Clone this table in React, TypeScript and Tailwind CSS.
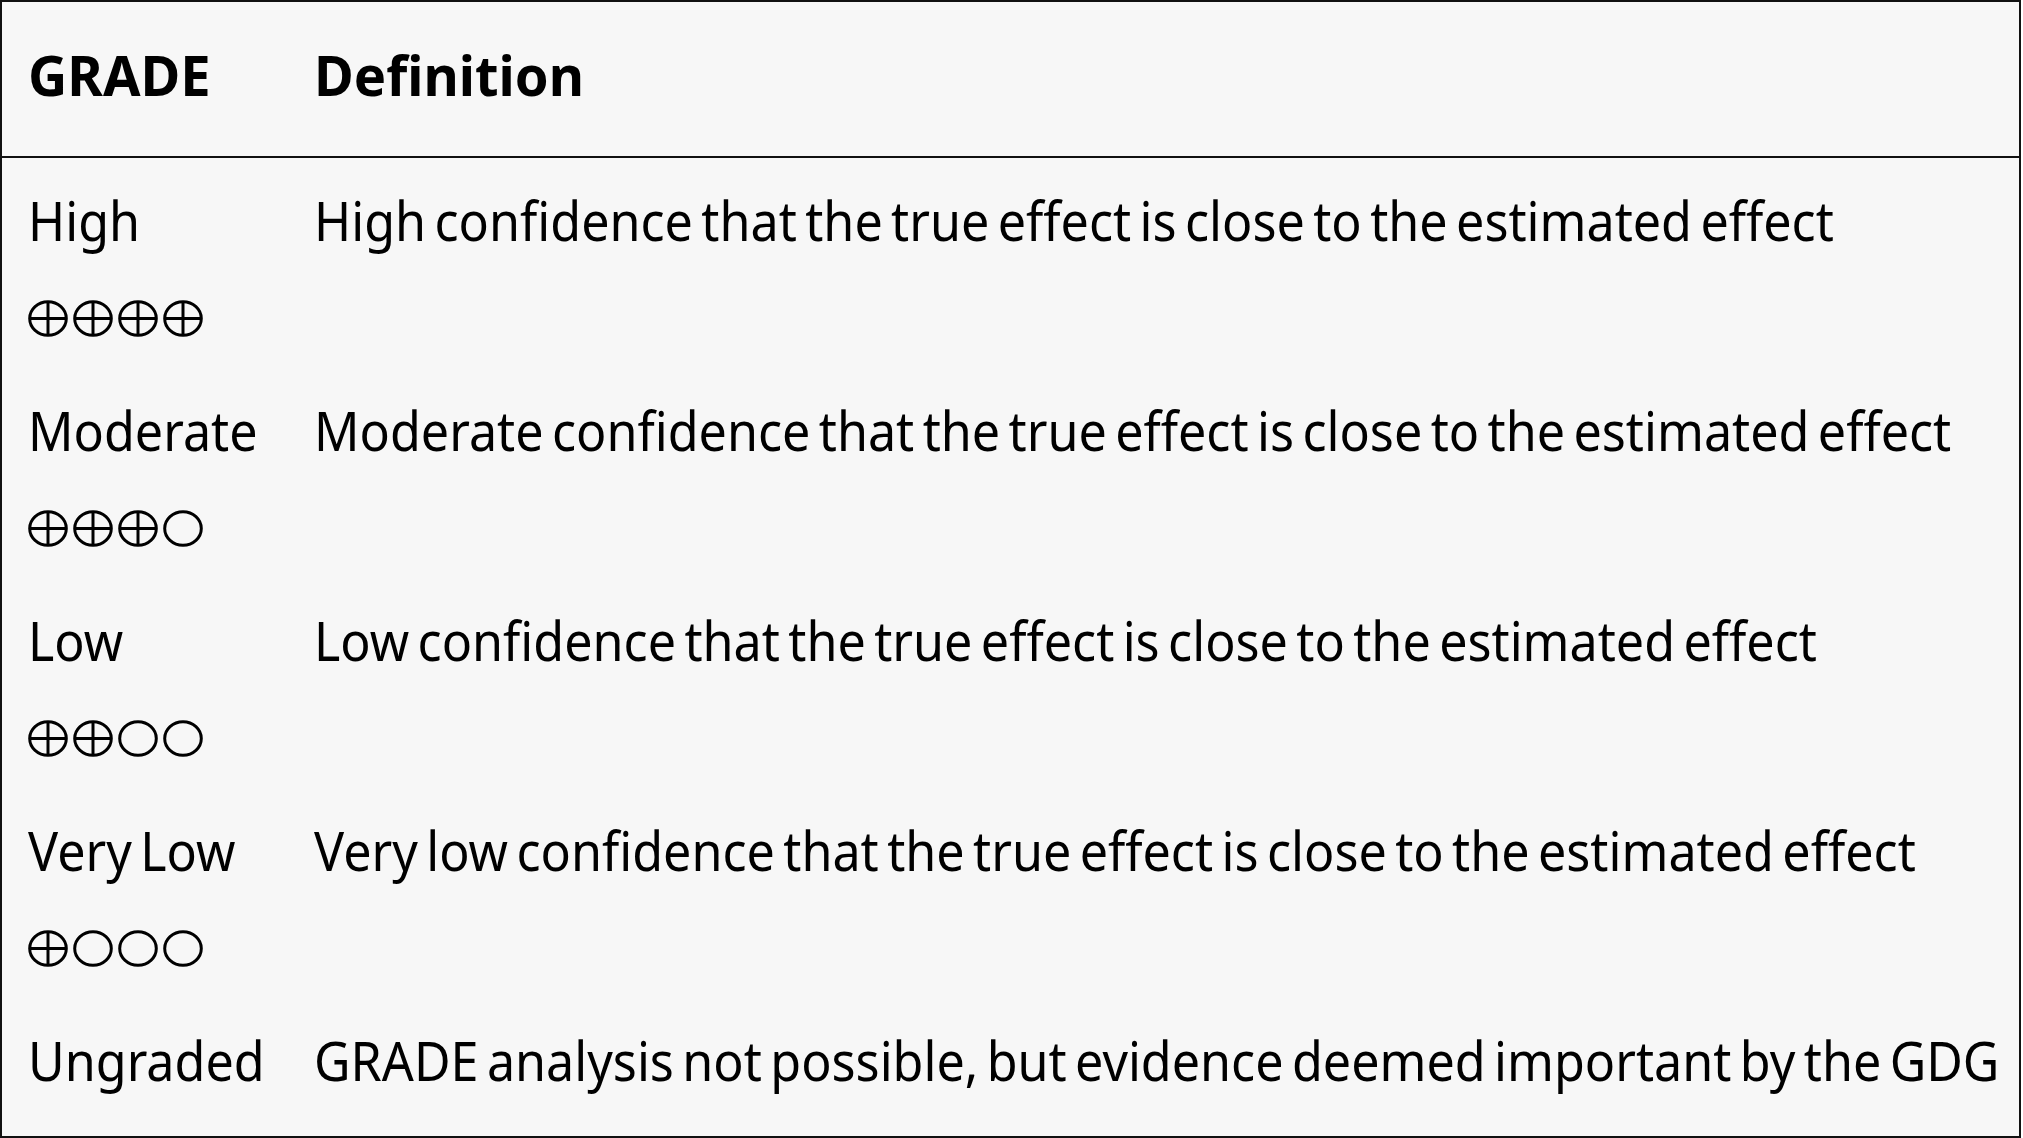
import React from "react";

// GRADE evidence quality table
type Row = { grade: string; filled: number; text: string };

const rows: Row[] = [
  { grade: "High", filled: 4, text: "High confidence that the true effect is close to the estimated effect" },
  { grade: "Moderate", filled: 3, text: "Moderate confidence that the true effect is close to the estimated effect" },
  { grade: "Low", filled: 2, text: "Low confidence that the true effect is close to the estimated effect" },
  { grade: "Very Low", filled: 1, text: "Very low confidence that the true effect is close to the estimated effect" },
];

// text in the shot is a bit narrow, so squeeze it horizontally
const Narrow = ({ children }: { children: React.ReactNode }) => (
  <span className="inline-block origin-left scale-x-[0.93] whitespace-nowrap [word-spacing:-5px]">{children}</span>
);

const HeadText = ({ children }: { children: React.ReactNode }) => (
  <span className="inline-block origin-left scale-x-[0.97] whitespace-nowrap">{children}</span>
);

const Mark = ({ plus }: { plus: boolean }) => (
  <svg width="40" height="37" viewBox="0 0 40 37" className="block">
    <ellipse cx="20" cy="18.5" rx="18.3" ry="16.8" fill="none" stroke="#000" strokeWidth="3" />
    {plus && (
      <>
        <line x1="20" y1="1.7" x2="20" y2="35.3" stroke="#000" strokeWidth="3" />
        <line x1="1.7" y1="18.5" x2="38.3" y2="18.5" stroke="#000" strokeWidth="3" />
      </>
    )}
  </svg>
);

const Marks = ({ filled }: { filled: number }) => (
  <div className="flex gap-[5px] mt-[43px] h-[37px]">
    {[0, 1, 2, 3].map((i) => (
      <Mark key={i} plus={i < filled} />
    ))}
  </div>
);

export default function App() {
  return (
    <div className="w-[2023px] h-[1138px] bg-white overflow-hidden">
      <div className="w-[2021px] h-[1138px] border-2 border-[#111] bg-[#f7f7f7] text-black font-['Noto_Sans',sans-serif] text-[54px] leading-[74px] flex flex-col overflow-hidden">
        {/* header */}
        <div className="flex pt-[35px] pb-[45px] border-b-2 border-[#111] font-bold text-[56px]">
          <div className="w-[312px] shrink-0 pl-[26px] h-[74px]">
            <HeadText>GRADE</HeadText>
          </div>
          <div className="flex-1 min-w-0 h-[74px]">
            <HeadText>Definition</HeadText>
          </div>
        </div>

        {/* body */}
        <div className="flex-1 pt-[25px]">
          {rows.map((r) => (
            <div key={r.grade} className="flex h-[210px]">
              <div className="w-[312px] shrink-0 pl-[26px]">
                <div className="h-[74px]">
                  <Narrow>{r.grade}</Narrow>
                </div>
                <Marks filled={r.filled} />
              </div>
              <div className="flex-1 min-w-0 h-[74px]">
                <Narrow>{r.text}</Narrow>
              </div>
            </div>
          ))}
          <div className="flex">
            <div className="w-[312px] shrink-0 pl-[26px] h-[74px]">
              <Narrow>Ungraded</Narrow>
            </div>
            <div className="flex-1 min-w-0 h-[74px]">
              <Narrow>GRADE analysis not possible, but evidence deemed important by the GDG</Narrow>
            </div>
          </div>
        </div>
      </div>
    </div>
  );
}
